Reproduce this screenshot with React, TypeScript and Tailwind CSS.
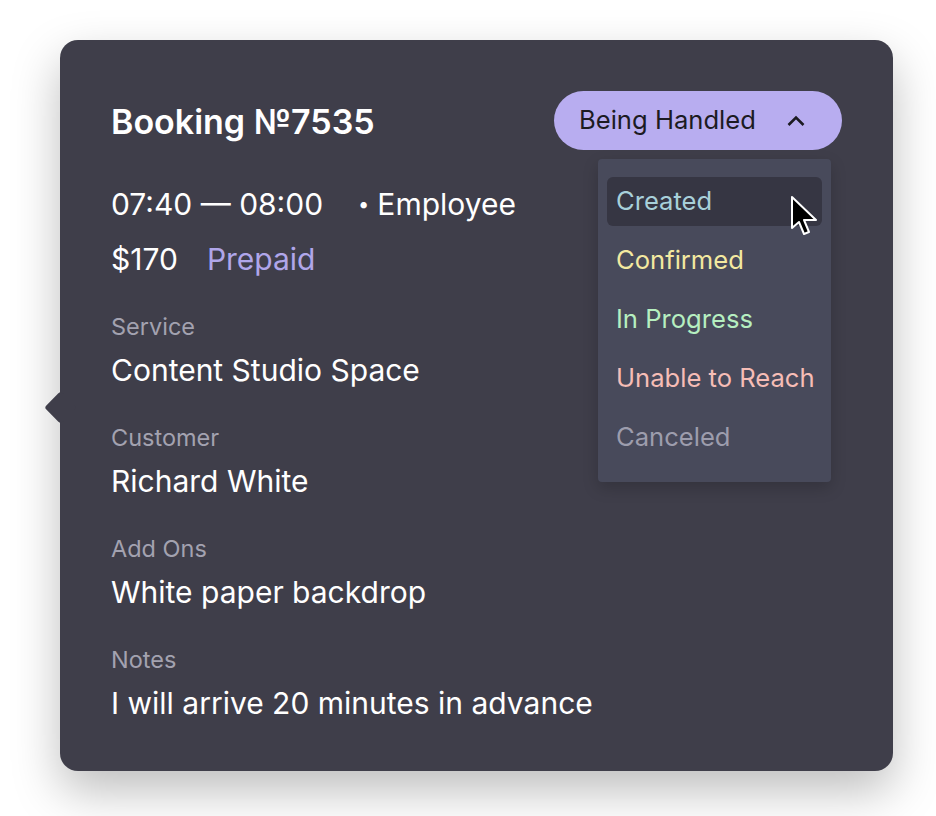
const statuses = [
  { label: 'Created', color: 'text-[#a8d0da]', active: true },
  { label: 'Confirmed', color: 'text-[#f3e9a0]' },
  { label: 'In Progress', color: 'text-[#b6efc0]' },
  { label: 'Unable to Reach', color: 'text-[#f6bdb6]' },
  { label: 'Canceled', color: 'text-[#9d9dad]' },
]

const details = [
  { label: 'Service', value: 'Content Studio Space' },
  { label: 'Customer', value: 'Richard White' },
  { label: 'Add Ons', value: 'White paper backdrop' },
  { label: 'Notes', value: 'I will arrive 20 minutes in advance' },
]

function Cursor() {
  return (
    <svg width="30" height="42" viewBox="0 0 30 42" className="absolute left-[183px] top-[18px]">
      <polygon
        points="2,2 2,33 9,27 14,39 19,37 14,25 26,25"
        fill="#000"
        stroke="#fff"
        strokeWidth="2"
        strokeLinejoin="round"
      />
    </svg>
  )
}

export default function App() {
  return (
    <div className="w-[936px] h-[816px] bg-white pt-[40px] pl-[60px] font-['Inter',sans-serif]">
      <div className="relative w-[833px] h-[731px] bg-[#3f3e4a] rounded-[18px] shadow-[0_20px_48px_rgba(0,0,0,0.26)] pl-[51px] pr-[51px] pt-[51px]">
        {/* pointer on the left edge */}
        <div className="absolute left-[-11px] top-[356px] w-[23px] h-[23px] rotate-45 rounded-[3px] bg-[#3f3e4a]" />

        {/* Header */}
        <div className="flex items-center justify-between h-[59px]">
          <h1 className="mt-[2px] text-[34px] leading-[40px] font-semibold text-white">Booking №7535</h1>
          <button className="flex items-center justify-between w-[288px] h-[59px] rounded-full bg-[#b8adf0] pl-[25px] pr-[37px] text-[25.6px] text-[#1c1b22]">
            Being Handled
            <svg width="18" height="12" viewBox="0 0 18 12">
              <polyline points="1.5,10 9,2.5 16.5,10" fill="none" stroke="#1c1b22" strokeWidth="2.6" />
            </svg>
          </button>
        </div>

        <div className="mt-[37px] flex items-center text-[30px] leading-[34px] text-white">
          <span>07:40 — 08:00</span>
          <span className="ml-[35px] mr-[8px] text-[20px]">•</span>
          <span>Employee</span>
        </div>
        <div className="mt-[21px] flex items-center gap-[29px] text-[30px] leading-[34px]">
          <span className="text-white">$170</span>
          <span className="text-[#b0a6ea]">Prepaid</span>
        </div>

        {details.map((d) => (
          <div key={d.label} className="mt-[38px]">
            <p className="text-[23.5px] leading-[26px] text-[#a3a2b0]">{d.label}</p>
            <p className="mt-[13px] text-[30px] leading-[34px] text-white">{d.value}</p>
          </div>
        ))}

        {/* Status dropdown */}
        <div className="absolute left-[538px] top-[119px] w-[233px] rounded-[4px] bg-[#484a5b] pt-[18px] pb-[20px] px-[9px] shadow-[0_6px_16px_rgba(0,0,0,0.18)] flex flex-col gap-[10px]">
          {statuses.map((s) => (
            <div
              key={s.label}
              className={`relative h-[49px] flex items-center pl-[9px] rounded-[6px] text-[25.6px] ${s.color} ${s.active ? 'bg-[#363643]' : ''}`}
            >
              {s.label}
              {s.active && <Cursor />}
            </div>
          ))}
        </div>
      </div>
    </div>
  )
}
